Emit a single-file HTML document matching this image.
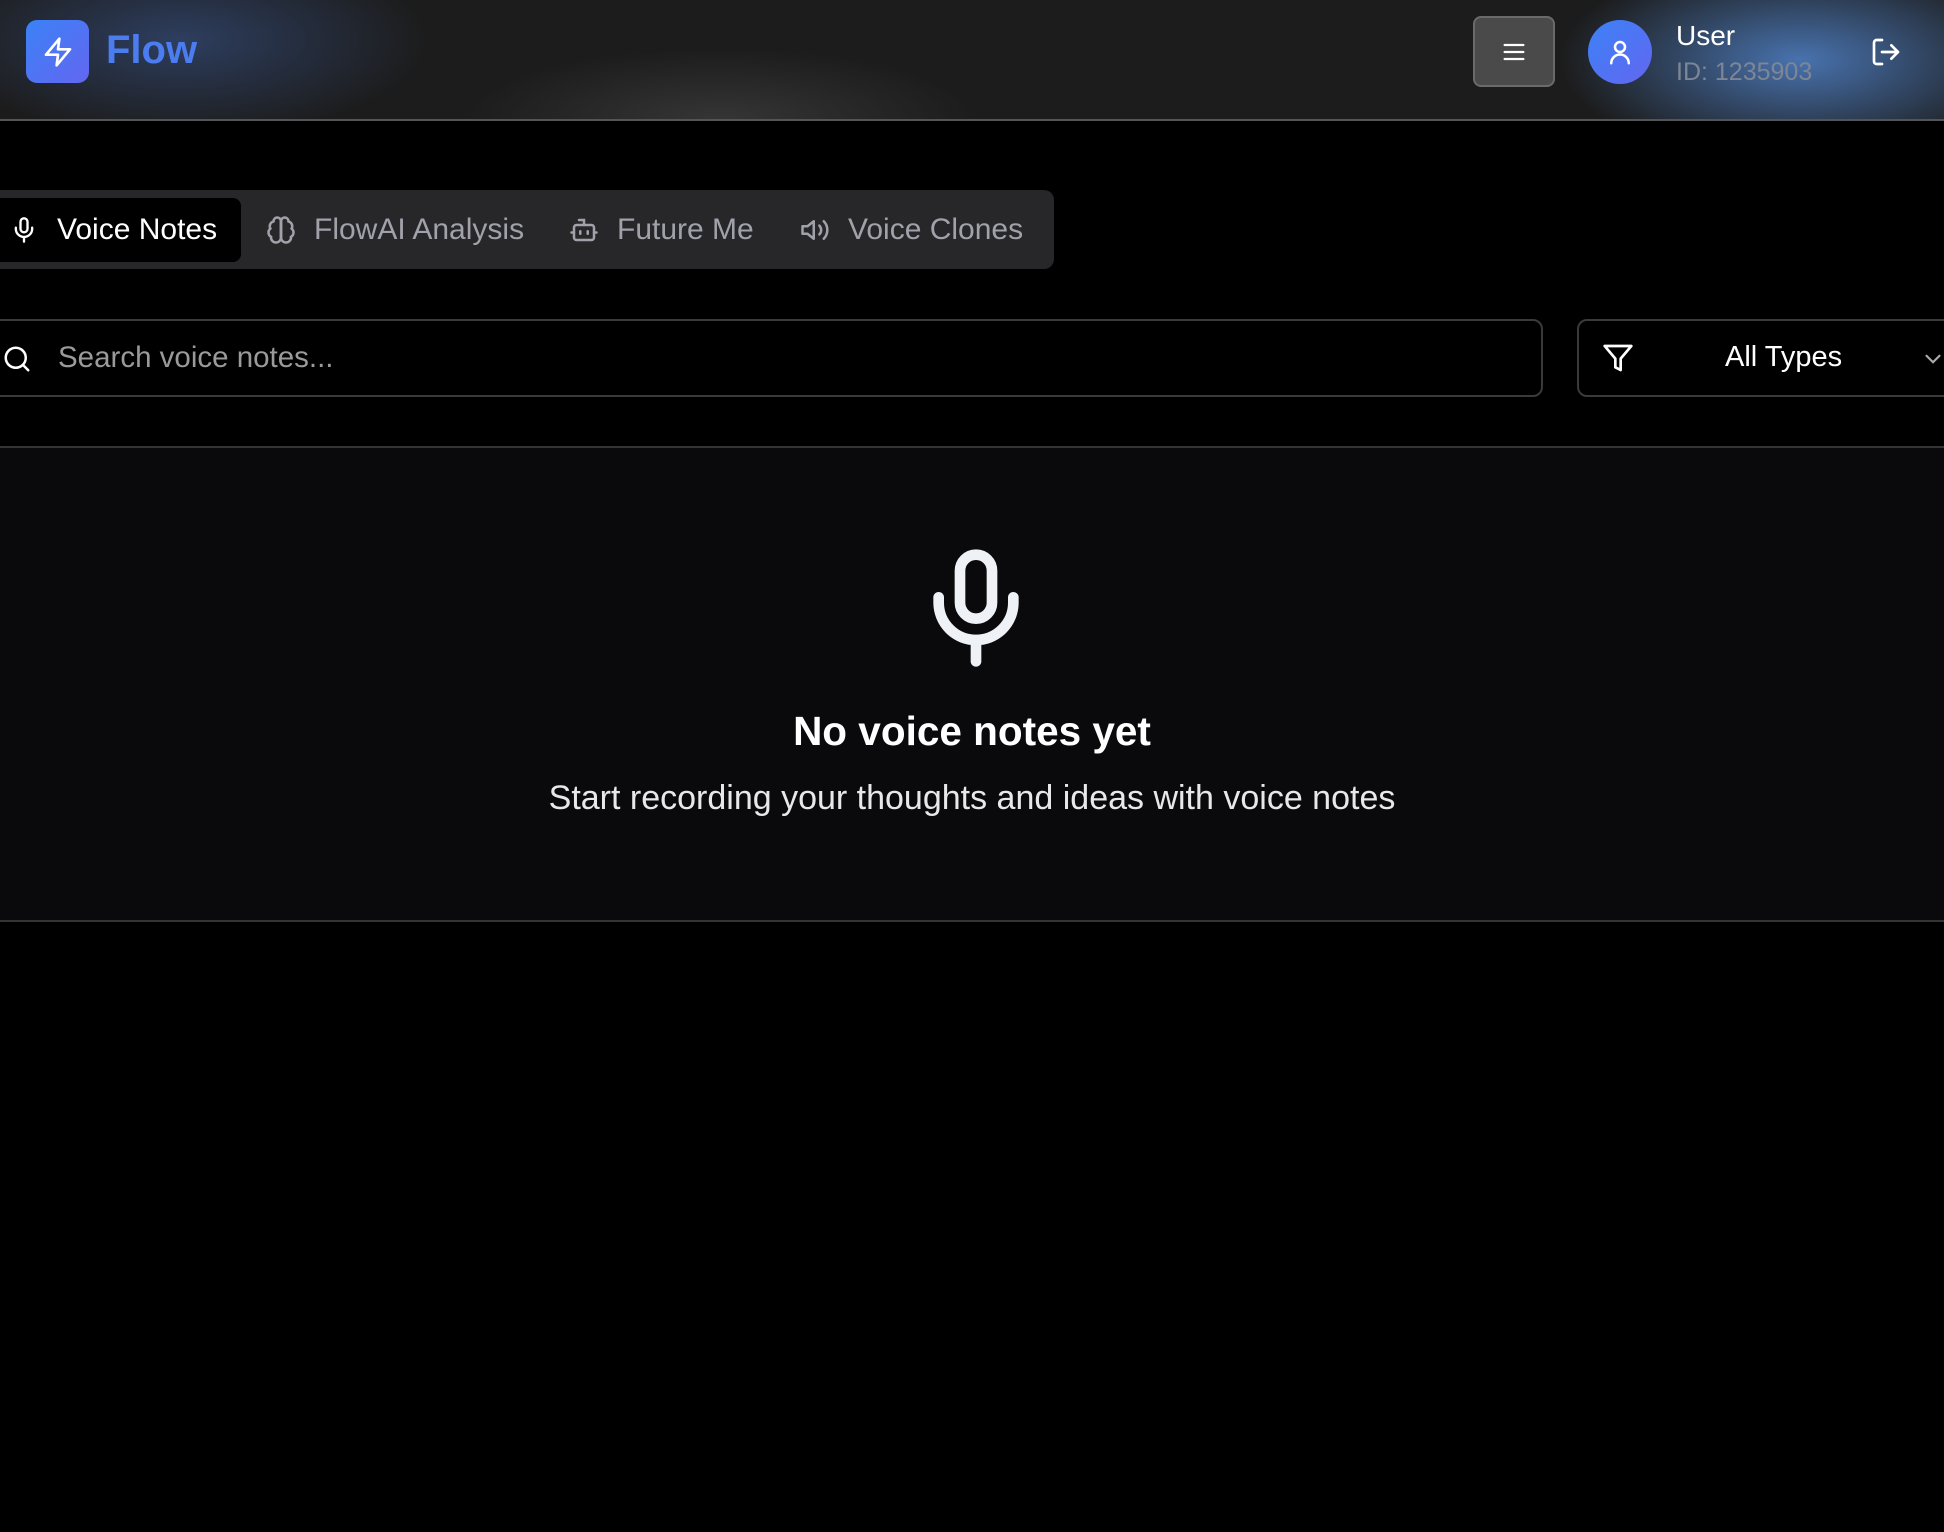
<!DOCTYPE html>
<html><head><meta charset="utf-8"><style>
*{box-sizing:border-box;margin:0;padding:0}
html,body{width:1944px;height:1532px;background:#000;overflow:hidden;font-family:"Liberation Sans",sans-serif;color:#fff}
.hdr{position:absolute;left:0;top:0;width:1944px;height:121px;border-bottom:2px solid #555;
background:
radial-gradient(ellipse 330px 130px at 180px 40px,rgba(60,90,150,.55),transparent 75%),
radial-gradient(ellipse 300px 130px at 1800px 60px,rgba(80,130,200,.85),transparent 80%),
radial-gradient(ellipse 320px 90px at 720px 120px,rgba(70,70,70,.6),transparent 80%),
#1c1c1c;overflow:hidden}
.logo{position:absolute;left:26px;top:20px;width:63px;height:63px;border-radius:11px;background:linear-gradient(135deg,#3b82f6,#6366f1);display:flex;align-items:center;justify-content:center}
.flow{position:absolute;left:106px;top:28px;font-size:40px;font-weight:bold;color:#4b7df0}
.menu{position:absolute;left:1473px;top:16px;width:82px;height:71px;border-radius:8px;background:#4a4a4a;border:2px solid #6a6a6a;display:flex;align-items:center;justify-content:center}
.av{position:absolute;left:1588px;top:20px;width:64px;height:64px;border-radius:50%;background:linear-gradient(135deg,#3b82f6,#6366f1);display:flex;align-items:center;justify-content:center}
.user{position:absolute;left:1676px;top:20px;font-size:28px}
.uid{position:absolute;left:1676px;top:58px;font-size:25px;color:#7d8696}
.out{position:absolute;left:1870px;top:36px}
.tabs{position:absolute;left:-10px;top:190px;width:1064px;height:79px;background:#27272a;border-radius:10px}
.tab{position:absolute;top:0;height:79px;display:flex;align-items:center;font-size:30px;color:#a1a1aa}
.act{position:absolute;left:0;top:198px;width:241px;height:64px;background:#000;border-radius:0 8px 8px 0}
.search{position:absolute;left:-10px;top:319px;width:1553px;height:78px;border:2px solid #3a3a3a;border-radius:10px}
.ph{position:absolute;left:58px;top:341px;font-size:29.5px;color:#9a9a9a}
.filter{position:absolute;left:1577px;top:319px;width:400px;height:78px;border:2px solid #3a3a3a;border-radius:10px}
.empty{position:absolute;left:0;top:446px;width:1944px;height:476px;background:#0a0a0c;border-top:2px solid #333;border-bottom:2px solid #333}
.h{position:absolute;left:0;width:1944px;text-align:center}
</style></head><body>
<div class="hdr">
<div class="logo"><svg width="32" height="32" viewBox="0 0 24 24" fill="none" stroke="#fff" stroke-width="2" stroke-linejoin="round" stroke-linecap="round"><path d="M13 2 3 14h9l-1 8 10-12h-9l1-8z"/></svg></div>
<div class="flow">Flow</div>
<div class="menu"><svg width="28" height="28" viewBox="0 0 24 24" stroke="#fff" stroke-width="2" stroke-linecap="round"><path d="M4 6h16M4 12h16M4 18h16"/></svg></div>
<div class="av"><svg width="30" height="30" viewBox="0 0 24 24" fill="none" stroke="#fff" stroke-width="2" stroke-linecap="round"><circle cx="12" cy="8" r="4"/><path d="M5 21a7 7 0 0 1 14 0"/></svg></div>
<div class="user">User</div>
<div class="uid">ID: 1235903</div>
<div class="out"><svg width="32" height="32" viewBox="0 0 24 24" fill="none" stroke="#fff" stroke-width="2" stroke-linecap="round" stroke-linejoin="round"><path d="M9 21H5a2 2 0 0 1-2-2V5a2 2 0 0 1 2-2h4M16 17l5-5-5-5M21 12H9"/></svg></div>
</div>

<div class="tabs"></div>
<div class="act"></div>
<div class="tab" style="left:10px;top:190px;color:#fff"><svg width="28" height="28" viewBox="0 0 24 24" fill="none" stroke="#fff" stroke-width="2" stroke-linecap="round"><rect x="9" y="2" width="6" height="12" rx="3"/><path d="M19 10v1a7 7 0 0 1-14 0v-1M12 18v4"/></svg><span style="margin-left:19px">Voice Notes</span></div>
<div class="tab" style="left:266px;top:190px"><svg width="30" height="30" viewBox="0 0 24 24" fill="none" stroke="#a1a1aa" stroke-width="2" stroke-linecap="round"><path d="M12 5a3 3 0 1 0-5.997.125 4 4 0 0 0-2.526 5.77 4 4 0 0 0 .556 6.588A4 4 0 1 0 12 18Z"/><path d="M12 5a3 3 0 1 1 5.997.125 4 4 0 0 1 2.526 5.77 4 4 0 0 1-.556 6.588A4 4 0 1 1 12 18Z"/><path d="M12 5v13"/></svg><span style="margin-left:18px">FlowAI Analysis</span></div>
<div class="tab" style="left:569px;top:190px"><svg width="30" height="30" viewBox="0 0 24 24" fill="none" stroke="#a1a1aa" stroke-width="2" stroke-linecap="round"><path d="M12 8V4H8"/><rect x="4" y="8" width="16" height="12" rx="2"/><path d="M2 14h2M20 14h2M15 13v2M9 13v2"/></svg><span style="margin-left:18px">Future Me</span></div>
<div class="tab" style="left:800px;top:190px"><svg width="30" height="30" viewBox="0 0 24 24" fill="none" stroke="#a1a1aa" stroke-width="2" stroke-linecap="round" stroke-linejoin="round"><path d="M11 5 6 9H2v6h4l5 4V5z"/><path d="M15.5 8.5a5 5 0 0 1 0 7M19 5a10 10 0 0 1 0 14"/></svg><span style="margin-left:18px">Voice Clones</span></div>

<div class="search"></div>
<svg style="position:absolute;left:2px;top:344px" width="30" height="30" viewBox="0 0 24 24" fill="none" stroke="#fff" stroke-width="2" stroke-linecap="round"><circle cx="11" cy="11" r="8"/><path d="m21 21-4.3-4.3"/></svg>
<div class="ph">Search voice notes...</div>
<div class="filter"></div>
<svg style="position:absolute;left:1602px;top:342px" width="32" height="32" viewBox="0 0 24 24" fill="none" stroke="#fff" stroke-width="2" stroke-linejoin="round"><path d="M22 3H2l8 9.46V19l4 2v-8.54L22 3z"/></svg>
<div style="position:absolute;left:1725px;top:341px;font-size:29px">All Types</div>
<svg style="position:absolute;left:1920px;top:346px" width="26" height="26" viewBox="0 0 24 24" fill="none" stroke="#aaa" stroke-width="2" stroke-linecap="round"><path d="m6 9 6 6 6-6"/></svg>

<div class="empty"></div>
<svg style="position:absolute;left:912px;top:542px" width="128" height="132" viewBox="0 0 24 24" fill="none" stroke="#eef2f7" stroke-width="2" stroke-linecap="round"><rect x="9" y="2" width="6" height="12" rx="3"/><path d="M19 10v1a7 7 0 0 1-14 0v-1M12 18v4"/></svg>
<div class="h" style="top:708px;font-size:40.5px;font-weight:bold">No voice notes yet</div>
<div class="h" style="top:779px;font-size:34px;color:#e8e8ea">Start recording your thoughts and ideas with voice notes</div>
</body></html>
